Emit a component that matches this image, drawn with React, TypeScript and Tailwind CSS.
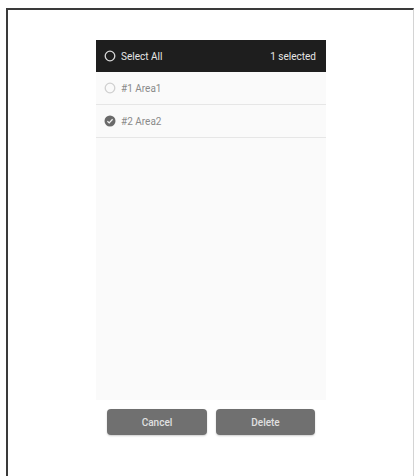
export default function App() {
  const rows = [
    { label: "#1 Area1", checked: false },
    { label: "#2 Area2", checked: true },
  ];

  return (
    <div className="h-[476px] w-[415px] overflow-hidden bg-white font-['Roboto',sans-serif]">
      <div className="ml-[6px] mt-[8px] h-[500px] w-[408px] border-l-2 border-t-2 border-r border-l-[#3a3a3a] border-t-[#3a3a3a] border-r-[#d4d4d4] bg-white pt-[30px]">
        <div className="ml-[88px] flex h-[360px] w-[230px] flex-col bg-[#fafafa]">
          <div className="flex h-[32px] items-center justify-between bg-[#1e1e1e] pl-[8px] pr-[10px]">
            <div className="flex items-center gap-[5px]">
              <svg width="12" height="12" viewBox="0 0 12 12">
                <circle cx="6" cy="6" r="4.8" fill="none" stroke="#d8d8d8" strokeWidth="1.3" />
              </svg>
              <span className="text-[10px] text-[#e6e6e6]">Select All</span>
            </div>
            <span className="text-[10px] text-[#e6e6e6]">1 selected</span>
          </div>
          {rows.map((r) => (
            <div key={r.label} className="flex h-[33px] items-center gap-[5px] border-b border-[#e6e6e6] pl-[8px]">
              {r.checked ? (
                <svg width="12" height="12" viewBox="0 0 12 12">
                  <circle cx="6" cy="6" r="5.5" fill="#6a6a6a" />
                  <path d="M3.4 6.2 L5.2 7.9 L8.6 4.3" fill="none" stroke="#f2f2f2" strokeWidth="1.3" />
                </svg>
              ) : (
                <svg width="12" height="12" viewBox="0 0 12 12">
                  <circle cx="6" cy="6" r="4.8" fill="none" stroke="#d0d0d0" strokeWidth="1.3" />
                </svg>
              )}
              <span className="text-[10px] text-[#8a8a8a]">{r.label}</span>
            </div>
          ))}
        </div>
        <div className="ml-[99px] mt-[9px] flex gap-[9px]">
          <button className="h-[26px] w-[100px] rounded-[4px] bg-[#707070] text-[10px] font-medium text-[#e0e0e0] shadow-[0_1px_2px_rgba(0,0,0,0.2)]">
            Cancel
          </button>
          <button className="h-[26px] w-[99px] rounded-[4px] bg-[#707070] text-[10px] font-medium text-[#e0e0e0] shadow-[0_1px_2px_rgba(0,0,0,0.2)]">
            Delete
          </button>
        </div>
      </div>
    </div>
  );
}
